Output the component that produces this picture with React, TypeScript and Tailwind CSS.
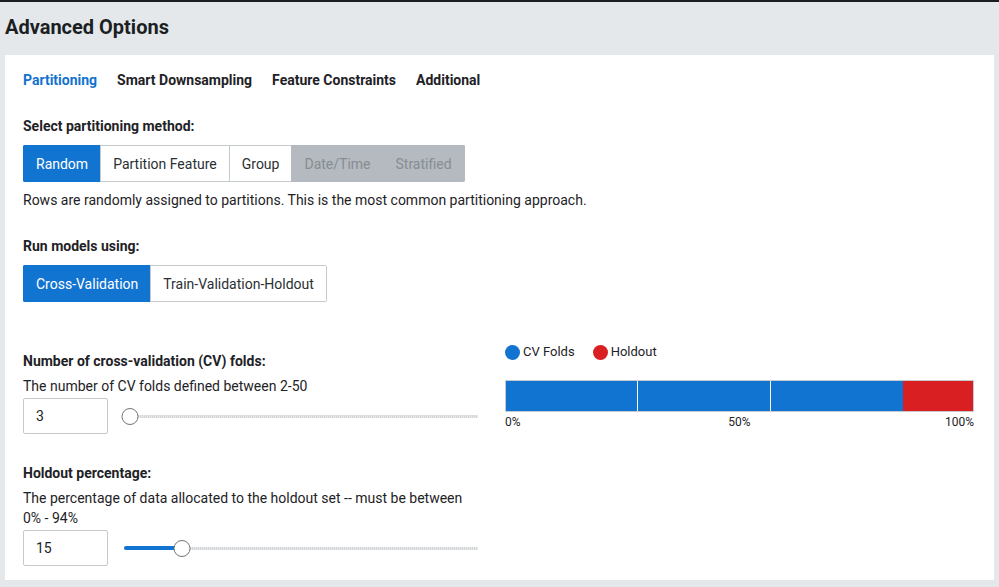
import React from "react"

const Slider: React.FC<{ pct: number }> = ({ pct }) => {
    return (
        <div className="relative flex-1 h-[18px] flex items-center">
            <div className="absolute left-[2px] right-0 h-[3px] bg-[repeating-linear-gradient(90deg,#d3d6d9_0px,#d3d6d9_1px,#e6e8ea_1px,#e6e8ea_2px)]" />
            {pct > 0 && (
                <div className="absolute left-[2px] h-[4px] rounded-full bg-[#1274d1]" style={{ width: `${pct}%` }} />
            )}
            <div
                className="absolute w-[17px] h-[17px] rounded-full border border-[#6f757b] bg-white -translate-x-1/2"
                style={{ left: `calc(${pct}% + 8px)` }}
            />
        </div>
    )
}

const SegButton: React.FC<{ label: string; active?: boolean; disabled?: boolean; first?: boolean }> = ({ label, active, disabled, first }) => {
    let cls = "bg-white text-[#2b2f33] border-[#c5cace]"
    if (active) cls = "bg-[#1274d1] text-white border-[#1274d1]"
    if (disabled) cls = "bg-[#b4babf] text-[#878d93] border-[#b4babf]"
    return (
        <div className={`h-full flex items-center px-3 border ${first ? "" : "-ml-px"} ${cls}`}>
            {label}
        </div>
    )
}

const App: React.FC = () => {
    return (
        <div className="w-[999px] h-[587px] bg-[#e4e8eb] border-t-2 border-[#1b1e21] font-['Roboto',sans-serif] text-[14px] leading-[20px] text-[#1e2226] overflow-hidden">
            <div className="h-[53px] flex items-center pl-[5px]">
                <h1 className="text-[20px] font-bold text-[#1b1f23] mt-[-4px]">Advanced Options</h1>
            </div>
            <div className="ml-[5px] w-[989px] h-[525px] bg-white px-[18px] pt-[15px]">
                <div className="flex gap-[20px] font-bold h-[20px] items-center">
                    <span className="text-[#1272cf]">Partitioning</span>
                    <span>Smart Downsampling</span>
                    <span>Feature Constraints</span>
                    <span>Additional</span>
                </div>

                <div className="mt-[26px] font-bold">Select partitioning method:</div>
                <div className="mt-[9px] flex h-[37px] rounded-[2px] overflow-hidden w-fit">
                    <SegButton label="Random" active first />
                    <SegButton label="Partition Feature" />
                    <SegButton label="Group" />
                    <SegButton label="Date/Time" disabled />
                    <SegButton label="Stratified" disabled />
                </div>
                <div className="mt-[8px]">Rows are randomly assigned to partitions. This is the most common partitioning approach.</div>

                <div className="mt-[26px] font-bold">Run models using:</div>
                <div className="mt-[9px] flex h-[37px] rounded-[2px] overflow-hidden w-fit">
                    <SegButton label="Cross-Validation" active first />
                    <SegButton label="Train-Validation-Holdout" />
                </div>

                <div className="mt-[39px] flex">
                    <div className="w-[455px]">
                        <div className="mt-[10px] font-bold">Number of cross-validation (CV) folds:</div>
                        <div className="mt-[5px]">The number of CV folds defined between 2-50</div>
                        <div className="mt-[2px] flex items-center gap-[14px]">
                            <div className="w-[85px] h-[36px] border border-[#c5cace] rounded-[2px] flex items-center px-[12px]">3</div>
                            <Slider pct={0} />
                        </div>

                        <div className="mt-[29px] font-bold">Holdout percentage:</div>
                        <div className="mt-[5px] w-[445px]">The percentage of data allocated to the holdout set -- must be between 0% - 94%</div>
                        <div className="mt-[2px] flex items-center gap-[14px]">
                            <div className="w-[85px] h-[36px] border border-[#c5cace] rounded-[2px] flex items-center px-[12px]">15</div>
                            <Slider pct={14.5} />
                        </div>
                    </div>

                    <div className="ml-[27px] w-[470px] text-[13px]">
                        <div className="flex items-center gap-[18px] h-[18px] mt-[2px]">
                            <div className="flex items-center gap-[3px]">
                                <span className="w-[15px] h-[15px] rounded-full bg-[#1274d1]" />
                                <span>CV Folds</span>
                            </div>
                            <div className="flex items-center gap-[3px]">
                                <span className="w-[15px] h-[15px] rounded-full bg-[#d91f22]" />
                                <span>Holdout</span>
                            </div>
                        </div>
                        <div className="mt-[19px] h-[32px] w-[469px] border border-[#c5cace] flex">
                            <div className="w-[132px] bg-[#1274d1] border-r border-white" />
                            <div className="w-[133px] bg-[#1274d1] border-r border-white" />
                            <div className="w-[132px] bg-[#1274d1]" />
                            <div className="flex-1 bg-[#d91f22]" />
                        </div>
                        <div className="grid grid-cols-3 text-[12px] leading-[16px] mt-[2px] w-[469px]">
                            <span>0%</span>
                            <span className="text-center">50%</span>
                            <span className="text-right">100%</span>
                        </div>
                    </div>
                </div>
            </div>
        </div>
    )
}

export default App
